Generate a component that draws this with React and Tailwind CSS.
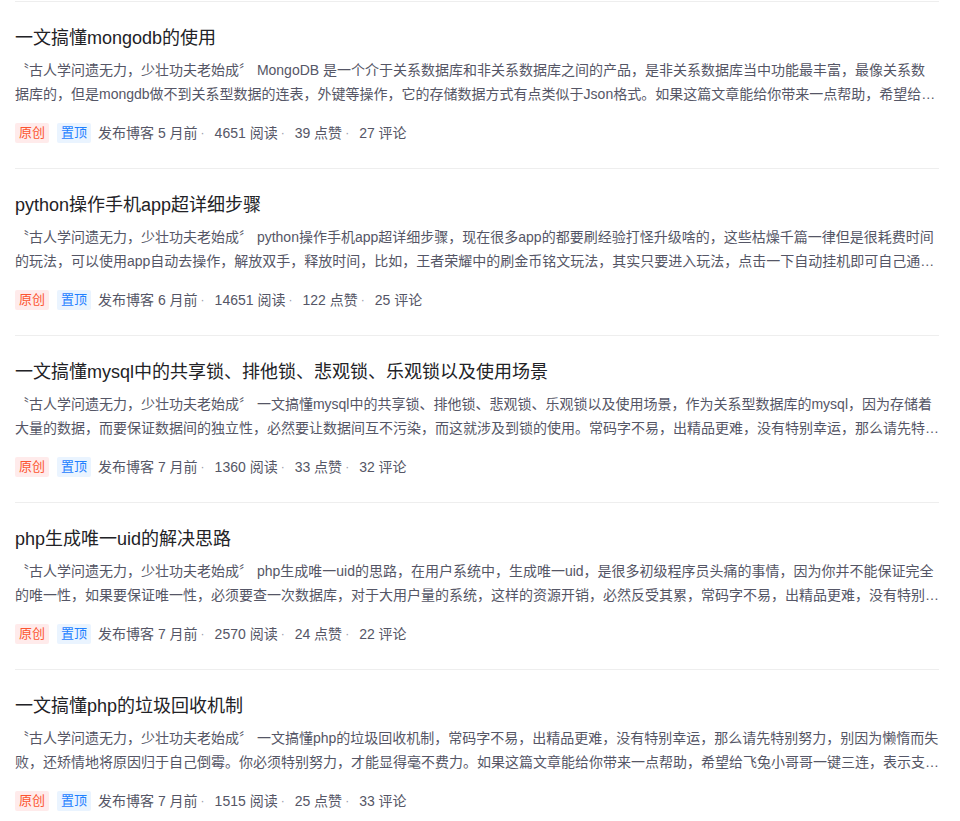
import React from "react";

const posts = [
  {
    title: "一文搞懂mongodb的使用",
    desc: "〝古人学问遗无力，少壮功夫老始成〞 MongoDB 是一个介于关系数据库和非关系数据库之间的产品，是非关系数据库当中功能最丰富，最像关系数据库的，但是mongdb做不到关系型数据的连表，外键等操作，它的存储数据方式有点类似于Json格式。如果这篇文章能给你带来一点帮助，希望给飞兔小哥哥一键三连，表示支持，谢谢各位小伙伴们。",
    time: "5 月前",
    reads: 4651,
    likes: 39,
    comments: 27,
  },
  {
    title: "python操作手机app超详细步骤",
    desc: "〝古人学问遗无力，少壮功夫老始成〞 python操作手机app超详细步骤，现在很多app的都要刷经验打怪升级啥的，这些枯燥千篇一律但是很耗费时间的玩法，可以使用app自动去操作，解放双手，释放时间，比如，王者荣耀中的刷金币铭文玩法，其实只要进入玩法，点击一下自动挂机即可自己通关，如果这篇文章能给你带来一点帮助。",
    time: "6 月前",
    reads: 14651,
    likes: 122,
    comments: 25,
  },
  {
    title: "一文搞懂mysql中的共享锁、排他锁、悲观锁、乐观锁以及使用场景",
    desc: "〝古人学问遗无力，少壮功夫老始成〞 一文搞懂mysql中的共享锁、排他锁、悲观锁、乐观锁以及使用场景，作为关系型数据库的mysql，因为存储着大量的数据，而要保证数据间的独立性，必然要让数据间互不污染，而这就涉及到锁的使用。常码字不易，出精品更难，没有特别幸运，那么请先特别努力，别因为懒惰而失败。",
    time: "7 月前",
    reads: 1360,
    likes: 33,
    comments: 32,
  },
  {
    title: "php生成唯一uid的解决思路",
    desc: "〝古人学问遗无力，少壮功夫老始成〞 php生成唯一uid的思路，在用户系统中，生成唯一uid，是很多初级程序员头痛的事情，因为你并不能保证完全的唯一性，如果要保证唯一性，必须要查一次数据库，对于大用户量的系统，这样的资源开销，必然反受其累，常码字不易，出精品更难，没有特别幸运，那么请先特别努力。",
    time: "7 月前",
    reads: 2570,
    likes: 24,
    comments: 22,
  },
  {
    title: "一文搞懂php的垃圾回收机制",
    desc: "〝古人学问遗无力，少壮功夫老始成〞 一文搞懂php的垃圾回收机制，常码字不易，出精品更难，没有特别幸运，那么请先特别努力，别因为懒惰而失败，还矫情地将原因归于自己倒霉。你必须特别努力，才能显得毫不费力。如果这篇文章能给你带来一点帮助，希望给飞兔小哥哥一键三连，表示支持，谢谢各位小伙伴们。",
    time: "7 月前",
    reads: 1515,
    likes: 25,
    comments: 33,
  },
];

// small dot between the meta fields
function Dot() {
  return <span className="ml-[3px] mr-[10px] text-[12px] text-[#999aaa]">·</span>;
}

function PostItem({ post }) {
  return (
    <div className="border-t border-[#eeeeee] pt-6 pb-6">
      <h3 className="text-[18px] leading-6 text-[#222226] truncate">
        {post.title}
      </h3>
      <p className="mt-2 text-[14px] leading-6 text-[#555666] line-clamp-2">
        {post.desc}
      </p>
      <div className="mt-4 flex items-center h-[22px] text-[14px] text-[#555666]">
        <span className="h-5 px-[4px] rounded-[2px] bg-[#ffebeb] text-[#fc5531] text-[13px] leading-5">
          原创
        </span>
        <span className="ml-2 h-5 px-[4px] rounded-[2px] bg-[#eaf4ff] text-[#1e80ff] text-[13px] leading-5">
          置顶
        </span>
        <span className="ml-[7px]">发布博客 {post.time}</span>
        <Dot />
        <span>{post.reads} 阅读</span>
        <Dot />
        <span>{post.likes} 点赞</span>
        <Dot />
        <span>{post.comments} 评论</span>
      </div>
    </div>
  );
}

export default function App() {
  return (
    <div
      className="min-h-screen bg-white pt-px pl-[15px] pr-[21px]"
      style={{ fontFamily: '"Liberation Sans", "Noto Sans CJK SC", sans-serif' }}
    >
      {posts.map((post, i) => (
        <PostItem key={i} post={post} />
      ))}
    </div>
  );
}
